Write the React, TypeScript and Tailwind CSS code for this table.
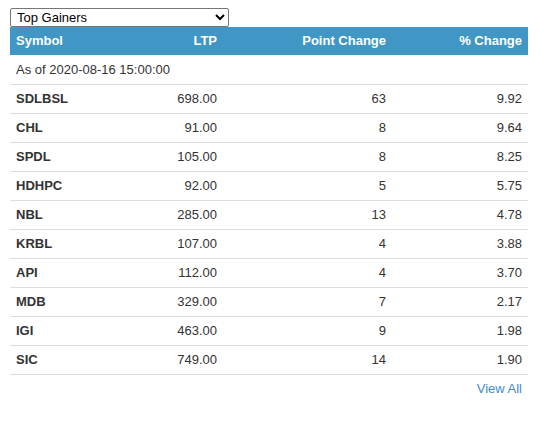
const rows = [
  { symbol: "SDLBSL", ltp: "698.00", point: "63", pct: "9.92" },
  { symbol: "CHL", ltp: "91.00", point: "8", pct: "9.64" },
  { symbol: "SPDL", ltp: "105.00", point: "8", pct: "8.25" },
  { symbol: "HDHPC", ltp: "92.00", point: "5", pct: "5.75" },
  { symbol: "NBL", ltp: "285.00", point: "13", pct: "4.78" },
  { symbol: "KRBL", ltp: "107.00", point: "4", pct: "3.88" },
  { symbol: "API", ltp: "112.00", point: "4", pct: "3.70" },
  { symbol: "MDB", ltp: "329.00", point: "7", pct: "2.17" },
  { symbol: "IGI", ltp: "463.00", point: "9", pct: "1.98" },
  { symbol: "SIC", ltp: "749.00", point: "14", pct: "1.90" },
]

export default function App() {
  return (
    <div className="bg-white w-[544px] h-[422px] pt-2 px-[10px] text-[13px] text-[#333] font-['Liberation_Sans',Arial,sans-serif]">
      <div className="w-[518px]">
        <select
          defaultValue="gainers"
          className="block w-[219px] h-[19px] border border-[#767676] rounded-[2px] bg-white text-[13px] text-black px-0.5 leading-none"
        >
          <option value="gainers">Top Gainers</option>
          <option value="losers">Top Losers</option>
          <option value="turnover">Top Turnover</option>
        </select>

        <table className="w-[518px] border-collapse table-fixed">
          <colgroup>
            <col className="w-[150px]" />
            <col className="w-[63px]" />
            <col className="w-[169px]" />
            <col className="w-[136px]" />
          </colgroup>
          <thead>
            <tr className="bg-[#4096c4] text-white h-[28px]">
              <th className="text-left font-bold px-1.5">Symbol</th>
              <th className="text-right font-bold px-1.5">LTP</th>
              <th className="text-right font-bold px-1.5">Point Change</th>
              <th className="text-right font-bold px-1.5">% Change</th>
            </tr>
          </thead>
          <tbody>
            <tr className="h-[29px] border-b border-[#ddd]">
              <td colSpan={4} className="px-1.5">As of 2020-08-16 15:00:00</td>
            </tr>
            {rows.map((r) => (
              <tr key={r.symbol} className="h-[29px] border-b border-[#ddd]">
                <td className="px-1.5 font-bold">{r.symbol}</td>
                <td className="px-1.5 text-right">{r.ltp}</td>
                <td className="px-1.5 text-right">{r.point}</td>
                <td className="px-1.5 text-right">{r.pct}</td>
              </tr>
            ))}
          </tbody>
        </table>

        <div className="flex justify-end pr-1.5 pt-1">
          <a href="#" className="text-[#428bca] hover:underline">View All</a>
        </div>
      </div>
    </div>
  )
}
